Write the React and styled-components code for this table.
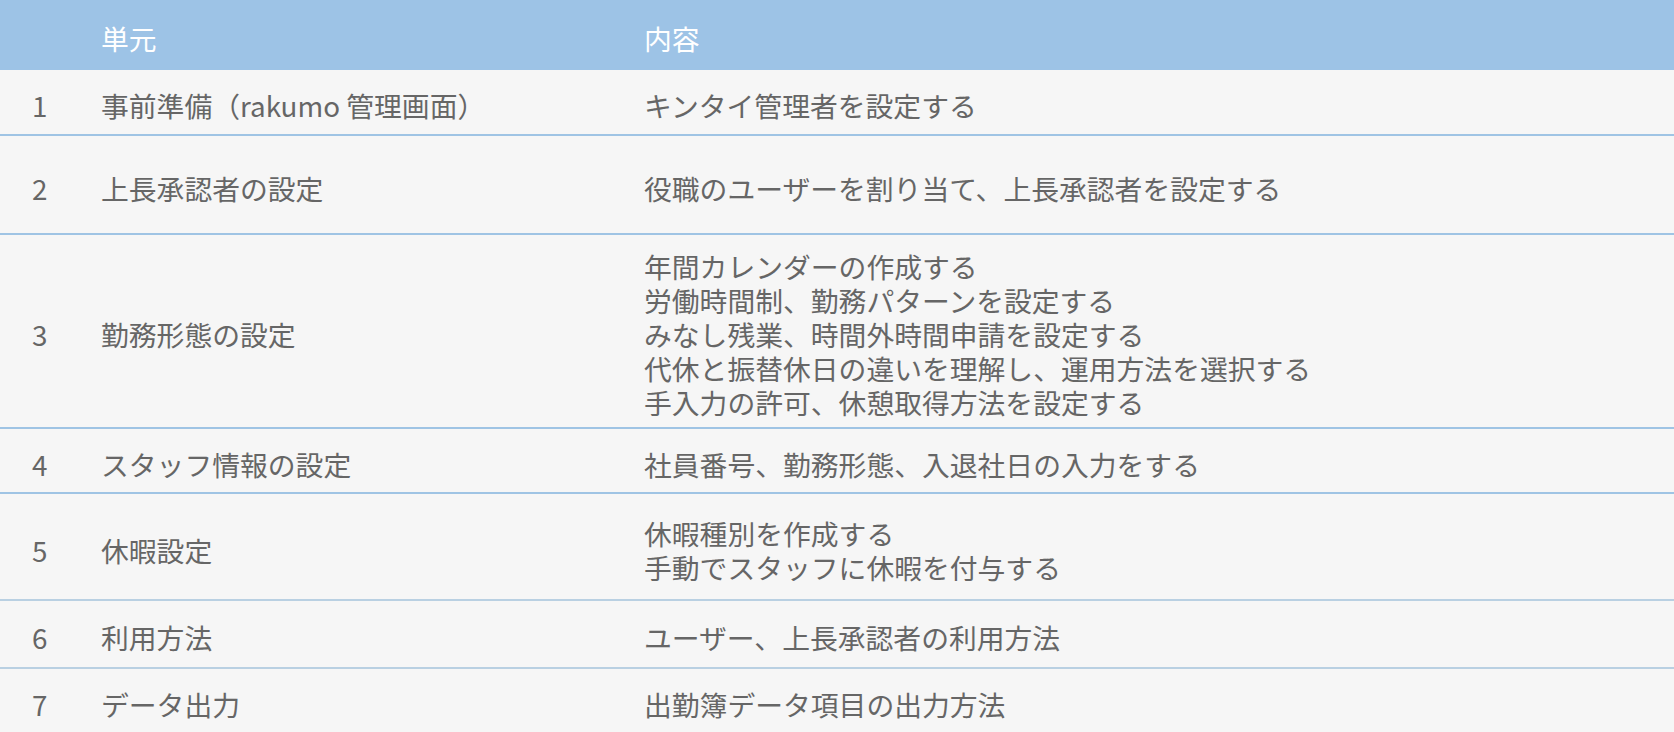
import styled, { createGlobalStyle } from 'styled-components';

const GlobalStyle = createGlobalStyle`
  html, body {
    margin: 0;
    padding: 0;
    background: #f6f6f6;
  }
  body {
    font-family: "Noto Sans CJK JP", "Noto Sans", sans-serif;
  }
`;

// table rows data
const rows = [
  { no: 1, unit: '事前準備（rakumo 管理画面）', content: ['キンタイ管理者を設定する'], height: 66 },
  { no: 2, unit: '上長承認者の設定', content: ['役職のユーザーを割り当て、上長承認者を設定する'], height: 99 },
  {
    no: 3,
    unit: '勤務形態の設定',
    content: [
      '年間カレンダーの作成する',
      '労働時間制、勤務パターンを設定する',
      'みなし残業、時間外時間申請を設定する',
      '代休と振替休日の違いを理解し、運用方法を選択する',
      '手入力の許可、休憩取得方法を設定する',
    ],
    height: 194,
  },
  { no: 4, unit: 'スタッフ情報の設定', content: ['社員番号、勤務形態、入退社日の入力をする'], height: 65 },
  { no: 5, unit: '休暇設定', content: ['休暇種別を作成する', '手動でスタッフに休暇を付与する'], height: 107, soft: true },
  { no: 6, unit: '利用方法', content: ['ユーザー、上長承認者の利用方法'], height: 68, soft: true },
  { no: 7, unit: 'データ出力', content: ['出勤簿データ項目の出力方法'], height: 64, last: true },
];

const Table = styled.div`
  width: 100%;
  background: #f6f6f6;
  color: #666666;
  font-size: 27.8px;
  line-height: 34px;
`;

const Row = styled.div`
  display: grid;
  grid-template-columns: 101px 543px 1fr;
  align-items: center;
  box-sizing: border-box;
  height: ${(p) => p.$h}px;
  padding-top: 6px;
  border-bottom: ${(p) => (p.$last ? 'none' : p.$soft ? '2px solid #b9d0e2' : '2px solid #9fc4e4')};
`;

const HeadRow = styled(Row)`
  background: #9dc3e6;
  color: #ffffff;
  border-bottom: none;
`;

const NoCell = styled.div`
  padding-left: 32px;
`;

const Cell = styled.div`
  white-space: nowrap;
`;

const Lines = styled.div`
  display: flex;
  flex-direction: column;
`;

export default function App() {
  return (
    <>
      <GlobalStyle />
      <Table>
        <HeadRow $h={70}>
          <NoCell />
          <Cell>単元</Cell>
          <Cell>内容</Cell>
        </HeadRow>
        {rows.map((r) => (
          <Row key={r.no} $h={r.height} $soft={r.soft} $last={r.last}>
            <NoCell>{r.no}</NoCell>
            <Cell>{r.unit}</Cell>
            <Lines>
              {r.content.map((line) => (
                <Cell key={line}>{line}</Cell>
              ))}
            </Lines>
          </Row>
        ))}
      </Table>
    </>
  );
}
